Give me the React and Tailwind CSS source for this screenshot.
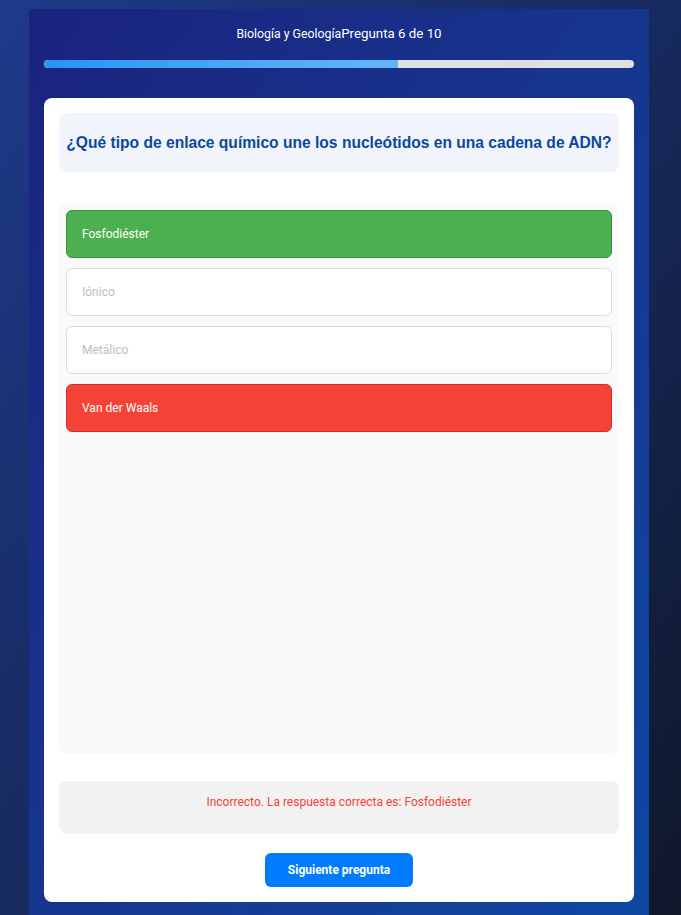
import React from 'react';

const options = [
  { label: 'Fosfodiéster', state: 'correct' },
  { label: 'Iónico', state: 'idle' },
  { label: 'Metálico', state: 'idle' },
  { label: 'Van der Waals', state: 'wrong' },
];

const optionClass = {
  correct: 'bg-[#4caf50] border-[#3d9140] text-white',
  wrong: 'bg-[#f44336] border-[#d32f2f] text-white',
  idle: 'bg-white border-[#dddddd] text-[#bdbdbd]',
};

export default function App() {
  return (
    <div className="h-[915px] overflow-hidden bg-gradient-to-br from-[#1e3a8a] via-[#172a5e] to-[#0f172a] flex pt-[9px] pl-[29px]">
      <div className="w-[620px] bg-gradient-to-br from-[#1a237e] to-[#0d47a1] px-[15px] pt-[17px] pb-[20px]">
        {/* header */}
        <div className="flex justify-center items-baseline text-white font-['Roboto',sans-serif] h-[16px]">
          <span className="text-[12.3px] leading-[16px]">Biología y Geología</span>
          <span className="text-[13.3px] leading-[16px]">Pregunta 6 de 10</span>
        </div>

        {/* progress */}
        <div className="mt-[18px] h-[8px] rounded-full bg-[#e0e0e0] overflow-hidden">
          <div className="h-full w-[60%] bg-gradient-to-r from-[#2196f3] to-[#64b5f6] rounded-l-full" />
        </div>

        {/* card */}
        <div className="mt-[30px] bg-white rounded-[8px] p-[15px]">
          <div className="bg-[#f1f5fb] rounded-[8px] h-[59px] flex items-center justify-center">
            <h2 className="font-['Liberation_Sans',Arial,sans-serif] font-bold text-[15.6px] text-[#0d47a1] whitespace-nowrap">
              ¿Qué tipo de enlace químico une los nucleótidos en una cadena de ADN?
            </h2>
          </div>

          <div className="mt-[31px] bg-[#fafafa] rounded-[8px] h-[551px] p-[7px] flex flex-col gap-[10px]">
            {options.map((o) => (
              <div
                key={o.label}
                className={`h-[48px] rounded-[6px] border flex items-center px-[15px] text-[12px] font-['Roboto',sans-serif] ${optionClass[o.state]}`}
              >
                {o.label}
              </div>
            ))}
          </div>

          <div className="mt-[27px] bg-[#f2f2f2] rounded-[8px] h-[53px] pt-[12px] text-center text-[12px] text-[#f44336] font-['Roboto',sans-serif]">
            Incorrecto. La respuesta correcta es: Fosfodiéster
          </div>

          <div className="mt-[19px] flex justify-center">
            <button className="w-[148px] h-[34px] rounded-[6px] bg-[#007bff] text-white font-bold text-[12px] font-['Roboto',sans-serif]">
              Siguiente pregunta
            </button>
          </div>
        </div>
      </div>
    </div>
  );
}
